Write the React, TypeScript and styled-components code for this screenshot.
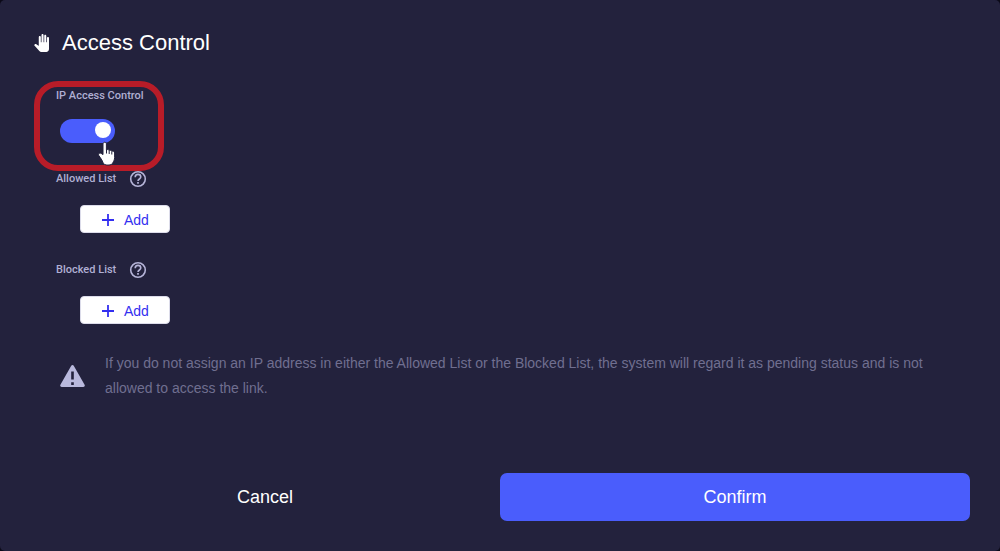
import React, { useState } from "react";
import styled, { createGlobalStyle } from "styled-components";

const GlobalStyle = createGlobalStyle`
  *, *::before, *::after { box-sizing: border-box; }
  body {
    margin: 0;
    background: #0b0a18;
    font-family: "Liberation Sans", Arial, sans-serif;
  }
`;

const Dialog = styled.main`
  display: flex;
  flex-direction: column;
  min-height: 100vh;
  padding: 29px 30px 30px;
  border-radius: 5px;
  background: #23223d;
  color: #ffffff;
`;

const Header = styled.header`
  display: flex;
  align-items: center;
  gap: 13px;
  padding-left: 4px;
`;

const Title = styled.h1`
  margin: 0;
  font-size: 22px;
  line-height: 28px;
  font-weight: 400;
`;

const Body = styled.div`
  display: flex;
  flex: 1;
  flex-direction: column;
  gap: 27px;
  padding: 30px 26px 0;
`;

const ToggleField = styled.div`
  position: relative;
  display: flex;
  flex-direction: column;
  align-items: flex-start;
  gap: 14px;
`;

const Caption = styled.label`
  color: #b0afd3;
  font-family: Roboto, "Liberation Sans", sans-serif;
  font-size: 11px;
  line-height: 18px;
  font-weight: 500;
`;

const Switch = styled.input`
  appearance: none;
  width: 55px;
  height: 24px;
  margin: 0 4px;
  padding: 3px 4px;
  border-radius: 12px;
  background: #6d6c8a;
  cursor: pointer;

  &::before {
    content: "";
    display: block;
    width: 16px;
    height: 16px;
    border-radius: 50%;
    background: #ffffff;
  }

  &:checked {
    background: #4a5dfc;
  }

  &:checked::before {
    margin-left: auto;
  }
`;

const Highlight = styled.div`
  position: absolute;
  top: -6px;
  left: -22px;
  width: 130px;
  height: 90px;
  border: 6px solid #b81c28;
  border-radius: 24px;
  pointer-events: none;
`;

const Pointer = styled.svg`
  position: absolute;
  top: 54px;
  left: 42px;
  pointer-events: none;
`;

const Lists = styled.div`
  display: flex;
  flex-direction: column;
  gap: 28px;
`;

const ListField = styled.section`
  display: flex;
  flex-direction: column;
  align-items: flex-start;
  gap: 17px;
`;

const ListHeader = styled.div`
  display: flex;
  align-items: center;
  height: 18px;
`;

const ListName = styled(Caption).attrs({ as: "h2" })`
  width: 73px;
  margin: 0;
`;

const HelpButton = styled.button`
  display: flex;
  padding: 0;
  border: 0;
  background: none;
  color: #b5b4d8;
  cursor: pointer;
`;

const AddButton = styled.button`
  display: flex;
  align-items: center;
  gap: 10px;
  width: 90px;
  height: 28px;
  margin-left: 24px;
  padding: 2px 21px 0;
  border: 1px solid #dcdcea;
  border-radius: 4px;
  background: #ffffff;
  color: #332ff0;
  font-family: inherit;
  font-size: 14px;
  cursor: pointer;

  svg { flex: none; }
`;

const Notice = styled.div`
  display: flex;
  align-items: center;
  gap: 20px;
  padding-left: 4px;
`;

const NoticeIcon = styled.svg`
  flex: none;
`;

const NoticeText = styled.p`
  margin: 0;
  color: #706f90;
  font-size: 14px;
  line-height: 25px;
`;

const Footer = styled.footer`
  display: grid;
  grid-template-columns: 1fr 1fr;
`;

const FooterButton = styled.button<{ $primary?: boolean }>`
  height: 48px;
  border: 0;
  border-radius: 7px;
  background: ${(p) => (p.$primary ? "#4a5dfc" : "transparent")};
  color: #ffffff;
  font-family: inherit;
  font-size: 18px;
  cursor: pointer;
`;

const HandIcon = () => (
  <svg width="15" height="18" viewBox="1 0 22 24" preserveAspectRatio="none" aria-hidden="true">
    <path
      fill="#fff"
      d="M23 5.500V20c0 2.200-1.800 4-4 4h-7.300c-1.080 0-2.100-.43-2.850-1.190L1 14.830s1.260-1.230 1.300-1.250c.22-.19.49-.29.79-.29.22 0 .42.06.6.16.04.01 4.310 2.460 4.310 2.460V4c0-.83.67-1.500 1.500-1.500S11 3.170 11 4v7h1V1.500c0-.83.67-1.500 1.500-1.500S15 .67 15 1.500V11h1V2.500c0-.83.67-1.500 1.500-1.500s1.500.67 1.500 1.500V11h1V5.500c0-.83.67-1.500 1.500-1.500s1.500.67 1.500 1.500z"
    />
  </svg>
);

const HelpIcon = () => (
  <svg width="18" height="18" viewBox="0 0 18 18" fill="none" stroke="currentColor" aria-hidden="true">
    <circle cx="9" cy="9" r="7.300" strokeWidth="1.600" />
    <path d="M6.200 7.200c0-1.700 1.200-2.800 2.800-2.800s2.800 1.100 2.800 2.600c0 1.900-2.800 2.100-2.800 4" strokeWidth="1.600" />
    <path d="M9 12v1.800" strokeWidth="1.700" />
  </svg>
);

const PlusIcon = () => (
  <svg width="12" height="12" viewBox="0 0 12 12" fill="none" stroke="currentColor" strokeWidth="1.800" aria-hidden="true">
    <path d="M6 0v12M0 6h12" />
  </svg>
);

const AccessList = ({ name }: { name: string }) => (
  <ListField aria-label={name}>
    <ListHeader>
      <ListName>{name}</ListName>
      <HelpButton type="button" aria-label={`About the ${name}`}>
        <HelpIcon />
      </HelpButton>
    </ListHeader>
    <AddButton type="button">
      <PlusIcon />
      Add
    </AddButton>
  </ListField>
);

export default function App() {
  const [enabled, setEnabled] = useState(true);

  return (
    <>
      <GlobalStyle />
      <Dialog>
        <Header>
          <HandIcon />
          <Title>Access Control</Title>
        </Header>
        <Body>
          <ToggleField>
            <Caption htmlFor="ip-access">IP Access Control</Caption>
            <Switch
              id="ip-access"
              type="checkbox"
              role="switch"
              checked={enabled}
              onChange={(e) => setEnabled(e.target.checked)}
            />
            <Highlight />
            <Pointer width="18" height="25" viewBox="0 0 18 25" aria-hidden="true">
              <path
                d="M5 3c0-2.300 3.400-2.300 3.400 0v6c.7-.8 2.400-.5 2.700.6.800-.6 2.300-.3 2.600.8 1-.6 2.900-.1 2.900 1.600v4.500c0 2.500-1 3.600-1.700 5.100-.8 1.800-2 2.500-4.900 2.500s-4.300-.8-5-2.600c-.8-2-1.600-3.300-2.600-4.700-.6-.9-1.200-1.600-1.700-2.500-.8-1.600 1-3 2.500-1.900L5 13.600Z"
                fill="#fff"
                stroke="#23223d"
                strokeWidth="1"
              />
              <path d="M8.500 9v3.500M11.200 10v3M13.800 11v2.500" stroke="#23223d" strokeWidth="1" />
            </Pointer>
          </ToggleField>
          <Lists>
            <AccessList name="Allowed List" />
            <AccessList name="Blocked List" />
          </Lists>
          <Notice>
            <NoticeIcon width="25" height="22" viewBox="0 0 25 22" aria-hidden="true">
              <path
                d="M11.100.9c.6-1.100 2.200-1.100 2.800 0l10.700 18.800c.6 1.100-.1 2.300-1.300 2.300H1.700C.5 22-.2 20.800.4 19.700Z"
                fill="#b9b9dd"
              />
              <path d="M12.500 6.500v8M12.500 17.300v2.700" stroke="#23223d" strokeWidth="2.600" />
            </NoticeIcon>
            <NoticeText>
              If you do not assign an IP address in either the Allowed List or the Blocked List, the
              system will regard it as pending status and is not allowed to access the link.
            </NoticeText>
          </Notice>
        </Body>
        <Footer>
          <FooterButton type="button">Cancel</FooterButton>
          <FooterButton type="button" $primary>
            Confirm
          </FooterButton>
        </Footer>
      </Dialog>
    </>
  );
}
